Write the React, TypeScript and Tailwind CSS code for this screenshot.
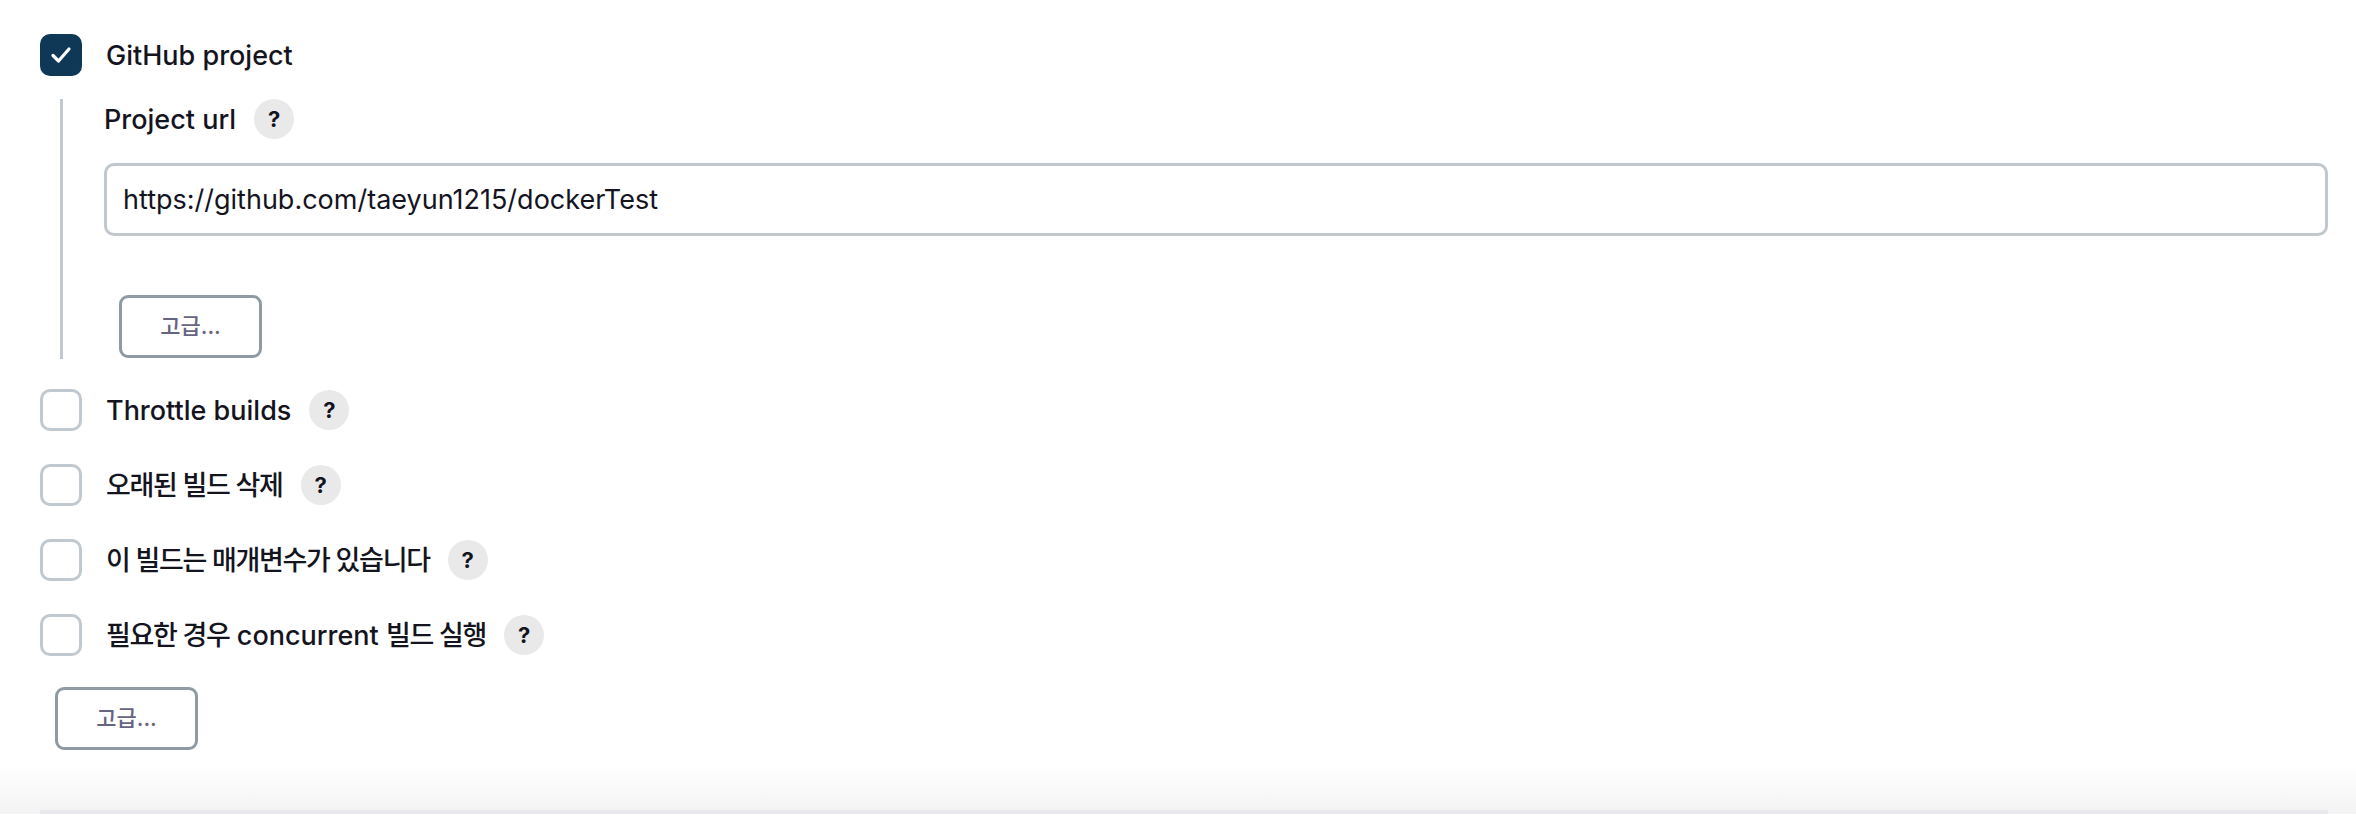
import React from 'react';

const font = { fontFamily: '"Inter", "Noto Sans CJK KR", sans-serif' };

const HelpIcon: React.FC = () => (
  <span className="ml-[18px] flex h-[40px] w-[40px] shrink-0 items-center justify-center rounded-full bg-[#e9e9ea] text-[22px] font-bold leading-none text-[#14141f]">
    ?
  </span>
);

const Checkbox: React.FC<{ checked?: boolean }> = ({ checked }) =>
  checked ? (
    <span className="flex h-[42px] w-[42px] shrink-0 items-center justify-center rounded-[10px] bg-[#0e3855]">
      <svg width="26" height="26" viewBox="0 0 26 26" fill="none">
        <polyline points="5,13.5 10.5,19 21,7" stroke="#fff" strokeWidth="3.2" strokeLinecap="round" strokeLinejoin="round" />
      </svg>
    </span>
  ) : (
    <span className="h-[42px] w-[42px] shrink-0 rounded-[10px] border-[3px] border-[#c0c9cf] bg-white" />
  );

const AdvancedButton: React.FC = () => (
  <button className="flex h-[63px] w-[143px] items-center justify-center rounded-[9px] border-[3px] border-[#8f9ba3] bg-white text-[22px] font-medium text-[#67657f]">
    고급...
  </button>
);

// Korean runs are set a little tighter to match the narrower system Hangul face
const Ko: React.FC<{ children: React.ReactNode }> = ({ children }) => (
  <span className="tracking-[-1.3px]">{children}</span>
);

const OptionRow: React.FC<{ children: React.ReactNode }> = ({ children }) => (
  <div className="flex h-[42px] items-center">
    <Checkbox />
    <span className="ml-[24px] text-[27px] font-medium leading-none text-[#14141f]">{children}</span>
    <HelpIcon />
  </div>
);

export default function App() {
  return (
    <div className="flex h-[816px] w-[2356px] flex-col overflow-hidden bg-white" style={font}>
      <div className="flex flex-col pl-[40px] pr-[28px] pt-[34px]">
        <div className="flex h-[42px] items-center">
          <Checkbox checked />
          <span className="ml-[24px] text-[27px] font-medium leading-none text-[#14141f]">GitHub project</span>
        </div>

        <div className="ml-[20px] mt-[23px] flex flex-col border-l-[3px] border-[#c0c9d0] pb-[1px] pl-[41px]">
          <div className="flex h-[40px] items-center">
            <span className="text-[27px] font-medium leading-none text-[#14141f]">Project url</span>
            <HelpIcon />
          </div>
          <input
            readOnly
            value="https://github.com/taeyun1215/dockerTest"
            className="mt-[24px] h-[73px] w-full rounded-[10px] border-[3px] border-[#c0c8ce] bg-white px-[16px] text-[27px] text-[#14141f] outline-none"
            style={font}
          />
          <div className="ml-[15px] mt-[59px]">
            <AdvancedButton />
          </div>
        </div>

        <div className="mt-[30px] flex flex-col gap-[33px]">
          <OptionRow>Throttle builds</OptionRow>
          <OptionRow>
            <Ko>오래된 빌드 삭제</Ko>
          </OptionRow>
          <OptionRow>
            <Ko>이 빌드는 매개변수가 있습니다</Ko>
          </OptionRow>
          <OptionRow>
            <Ko>필요한 경우</Ko> concurrent <Ko>빌드 실행</Ko>
          </OptionRow>
        </div>

        <div className="ml-[15px] mt-[31px]">
          <AdvancedButton />
        </div>
      </div>

      <div className="mt-[15px] h-[45px] bg-gradient-to-b from-white to-[#f4f4f5]" />
      <div className="flex bg-[#f4f4f5] pl-[40px] pr-[28px]">
        <div className="h-[4px] w-full bg-[#e8e8ed]" />
      </div>
    </div>
  );
}
